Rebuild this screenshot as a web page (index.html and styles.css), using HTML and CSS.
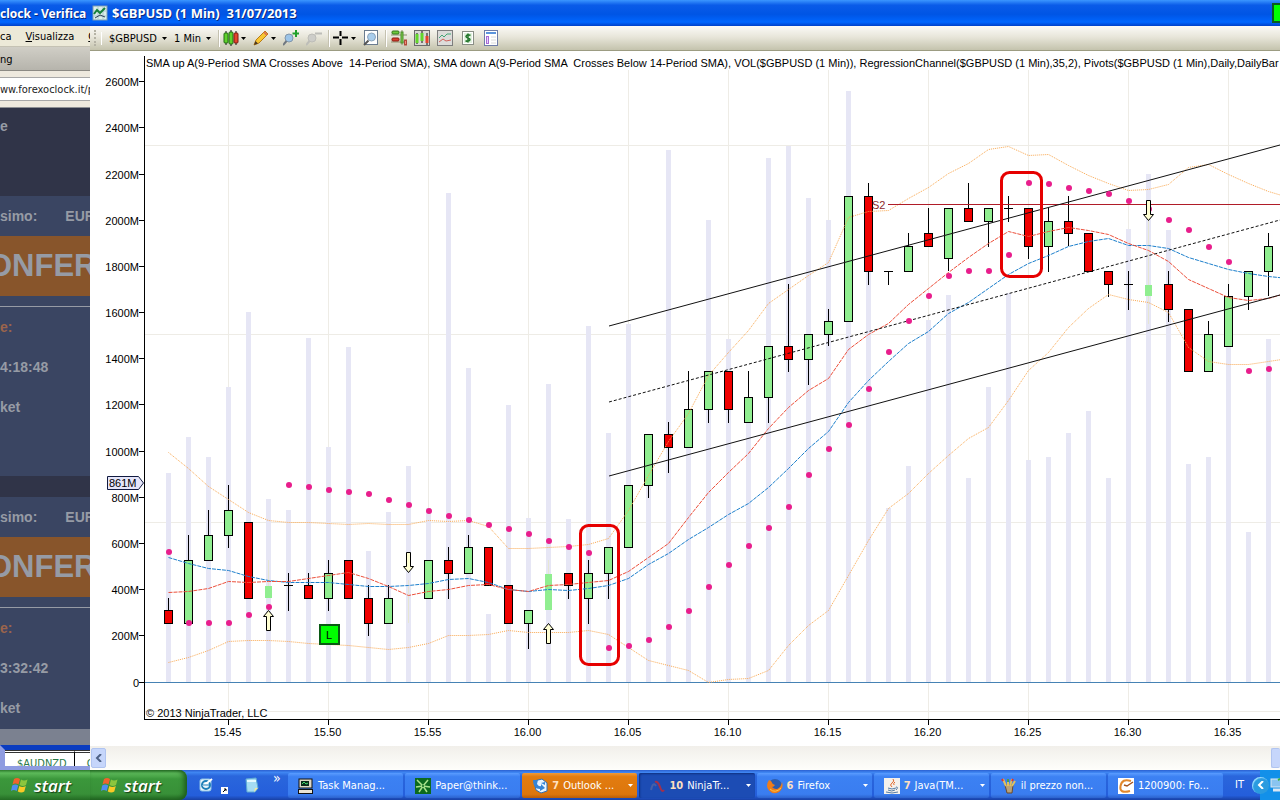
FILE: index.html
```html
<!DOCTYPE html>
<html lang="it">
<head>
    <meta charset="UTF-8">
    <meta name="viewport" content="width=device-width, initial-scale=1.0">
    <title>$GBPUSD (1 Min) 31/07/2013</title>
    <link rel="stylesheet" href="styles.css">
</head>
<body>
    <!-- Shared icons -->
    <svg class="defs" width="0" height="0">
        <symbol id="flag" viewBox="0 0 18 18">
            <path d="M3 3q3-2 6 0l-1.500 5.500q-3-2-6 0z" fill="#f0622c"/>
            <path d="M10 3.500q3 2 6.500 0L15 9q-3 2-6.500 0z" fill="#8cc63e"/>
            <path d="M1.200 9.500q3-2 6 0L5.700 15q-3-2-5.700 0z" fill="#4f8df0"/>
            <path d="M8.300 10q3 2 6.500 0l-1.500 5.500q-3 2-6.500 0z" fill="#fbc926"/>
        </symbol>
        <symbol id="caret" viewBox="0 0 5 3"><path d="M0 0h5L2.500 3z" fill="currentColor"/></symbol>
    </svg>

    <div class="desktop">
        <!-- Browser window behind -->
        <section class="browser">
            <div class="titlebar">clock - Verifica</div>
            <nav class="menubar">
                <a href="#">ca</a>
                <a href="#"><u>V</u>isualizza</a>
                <a href="#"><u>C</u></a>
            </nav>
            <div class="tabs">ng</div>
            <div class="address"><input type="text" aria-label="Indirizzo" value="ww.forexoclock.it/p"></div>
            <div class="page">
                <div class="page-head">e</div>
                <div class="pair"><span>simo:</span><span>EUR</span></div>
                <div class="banner">ONFER</div>
                <div class="info">
                    <p class="accent">e:</p>
                    <p>4:18:48</p>
                    <p>ket</p>
                </div>
                <div class="gap"></div>
                <div class="pair"><span>simo:</span><span>EUR</span></div>
                <div class="banner">ONFER</div>
                <div class="info last">
                    <p class="accent">e:</p>
                    <p>3:32:42</p>
                    <p>ket</p>
                </div>
            </div>
            <div class="page-foot"></div>
            <div class="grid-strip"><span>$AUDNZD</span><span>C</span></div>
        </section>

        <!-- Chart window -->
        <section class="chart-window">
            <header class="titlebar">
                <svg class="icon" viewBox="0 0 16 16"><rect x="1" y="1" width="14" height="14" fill="#dceee8" stroke="#7d9db5"/><path d="M1 6h14M1 11h14M6 1v14M11 1v14" stroke="#a9c6cf"/><path d="M2 9l3-4 3 3 5-5" stroke="#16803b" stroke-width="2" fill="none"/><path d="M3 13l5-3 5 2" stroke="#345" fill="none"/></svg>
                <h1>$GBPUSD (1 Min)&nbsp; 31/07/2013</h1>
                <span class="status-light"></span>
            </header>

            <div class="toolbar">
                <span class="grip"></span>
                <label class="picker wide"><select aria-label="Instrument"><option>$GBPUSD</option></select><svg><use href="#caret"/></svg></label>
                <label class="picker"><select aria-label="Period"><option>1 Min</option></select><svg><use href="#caret"/></svg></label>
                <span class="sep"></span>
                <button class="drop" aria-label="Chart style"><svg class="icon" viewBox="0 0 16 16"><path d="M3 1v14M8 0v16M13 1v14" stroke="#111"/><rect x="1" y="3" width="4" height="10" rx="1" fill="#5fd12c" stroke="#236b12"/><rect x="6" y="2" width="4" height="12" rx="1" fill="#5fd12c" stroke="#236b12"/><rect x="11" y="3" width="4" height="10" rx="1" fill="#e5442c" stroke="#7d1a10"/></svg><svg class="caret"><use href="#caret"/></svg></button>
                <button class="drop" aria-label="Drawing tools"><svg class="icon" viewBox="0 0 16 16"><path d="M1 15l2-5L12 1l3 3-9 9z" fill="#f8c632" stroke="#b77b17"/><path d="M1 15l1.500-4L5 13.500z" fill="#4a3a25"/><path d="M11 2l3 3" stroke="#e0744c" stroke-width="2"/></svg><svg class="caret"><use href="#caret"/></svg></button>
                <button aria-label="Zoom in"><svg class="icon" viewBox="0 0 16 16"><circle cx="6" cy="8" r="4" fill="#9cc4e8" stroke="#8296aa"/><path d="M3.500 11L0 15" stroke="#6f7780" stroke-width="2"/><path d="M13 0v7M9.500 3.500h7" stroke="#21a12c" stroke-width="2"/></svg></button>
                <button aria-label="Zoom out" disabled><svg class="icon" viewBox="0 0 16 16"><circle cx="6" cy="8" r="4" fill="#cdcdc9" stroke="#bdbdb8"/><path d="M3.500 11L0 15" stroke="#bdbdb8" stroke-width="2"/><path d="M9 3.500h7" stroke="#bdbdb8" stroke-width="2"/></svg></button>
                <span class="sep"></span>
                <button class="drop" aria-label="Cross hair"><svg class="icon" viewBox="0 0 16 16"><path d="M7.500 1v5M7.500 9v6M0 7.500h6M9 7.500h6" stroke="#000" stroke-width="2"/></svg><svg class="caret"><use href="#caret"/></svg></button>
                <button class="spaced" aria-label="Data box"><svg class="icon" viewBox="0 0 16 16"><rect x="1.500" y=".5" width="13" height="14" fill="#fff" stroke="#6b7c90"/><circle cx="8.500" cy="7" r="4" fill="#a9cdec" stroke="#8ba3ba"/><path d="M5.500 10.500L1 15" stroke="#555" stroke-width="2"/></svg></button>
                <span class="sep"></span>
                <button class="tool" aria-label="Chart trader"><svg class="icon" viewBox="0 0 16 16"><path d="M0 5h16M0 12h16M11 0v15" stroke="#8a8f6c"/><rect x="1" y="1" width="7" height="3" rx="1" fill="#6dc83b" stroke="#34741a"/><rect x="1" y="8" width="7" height="3" rx="1" fill="#dc3f2f" stroke="#8b1c12"/><rect x="10" y="2" width="2" height="11" fill="#7ed04b" stroke="#4a8c2a"/><rect x="13.500" y="10" width="2" height="5" fill="#f08a7c" stroke="#b04a3a"/></svg></button>
                <button class="tool" aria-label="Data series"><svg class="icon" viewBox="0 0 16 16"><rect x=".5" y=".5" width="15" height="15" fill="#d9d9d4" stroke="#6a6a6a"/><path d="M3 3v11M8 1v12M13 3v12" stroke="#111"/><rect x="1.500" y="4" width="3" height="9" fill="#63d62b"/><rect x="6.500" y="3" width="3" height="8" fill="#63d62b"/><rect x="11.500" y="6" width="3" height="7" fill="#e5442c"/></svg></button>
                <button class="tool" aria-label="Indicators"><svg class="icon" viewBox="0 0 16 16"><rect x=".5" y=".5" width="15" height="15" fill="#dcdcda" stroke="#7e7e7e"/><path d="M2 8l3-3 2 2 3-3h4" stroke="#43a777" fill="none"/><path d="M2 12l4-3 3 2 5-1" stroke="#d0605a" fill="none"/></svg></button>
                <button class="tool" aria-label="Strategies"><svg class="icon" viewBox="0 0 16 16"><rect x="2.500" y="1.500" width="11" height="13" fill="#fff" stroke="#8a8f86"/><rect x="4" y="3" width="8" height="10" fill="#e2f2df"/><path d="M10.500 5.500Q8 4 6.500 5.500T8 8t1.500 2.500-4 .3M8 3.500v9" stroke="#23762c" stroke-width="1.500" fill="none"/></svg></button>
                <button class="tool" aria-label="Properties"><svg class="icon" viewBox="0 0 16 16"><rect x="1.500" y=".5" width="13" height="15" fill="#fff" stroke="#6f7da8"/><rect x="3" y="2" width="10" height="2" fill="#5b94dc"/><rect x="3.500" y="6.500" width="2" height="7" fill="#ead5fa" stroke="#a56bd8"/><path d="M8 7h5M8 10h5M8 13h5" stroke="#dadada"/></svg></button>
            </div>

            <svg id="chart" class="chart" viewBox="90 51 1190 695" preserveAspectRatio="xMinYMin slice"></svg>

            <div class="scrollbar">
                <button aria-label="Scroll left"><svg viewBox="0 0 8 8"><path d="M6 0L2 4l4 4" fill="none" stroke="#4d6185" stroke-width="2"/></svg></button>
                <span class="thumb"></span>
            </div>
        </section>
    </div>

    <footer class="taskbar">
        <button class="start clipped"><svg><use href="#flag"/></svg>start</button>
        <button class="start"><svg><use href="#flag"/></svg>start</button>
        <div class="quick">
            <button aria-label="Browser"><svg class="icon" viewBox="0 0 16 16"><rect x="2" y="2" width="11" height="12" rx="2" fill="#e7f4fb" stroke="#8cc3e6"/><circle cx="8" cy="8" r="4" fill="none" stroke="#1d7fb8" stroke-width="2"/><path d="M5 9l9-7" stroke="#fff" stroke-width="2"/><path d="M5 8h6" stroke="#1d7fb8"/></svg></button>
            <svg class="shortcut" viewBox="0 0 7 7"><rect width="7" height="7" fill="#fff"/><path d="M2 5l3-3M3 2h2v2" stroke="#000" fill="none"/></svg>
            <button aria-label="Documents"><svg class="icon" viewBox="0 0 16 16"><path d="M2 2l10-1 2 10-3 4H3z" fill="#a5dcf3" stroke="#5eaad4"/><path d="M3 4h9" stroke="#e6faff" stroke-width="2"/><path d="M10 15l4-4h-3z" fill="#f2e7a0"/></svg></button>
            <span class="more">»</span>
        </div>
        <div class="tasks">
            <button><svg class="icon" viewBox="0 0 16 16"><rect x="1" y="1" width="13" height="9" fill="#ddd8c8" stroke="#111"/><rect x="3" y="3" width="8" height="5" fill="#0b2a1a"/><path d="M4 6l2-2 2 2 2-1" stroke="#43df6c" fill="none"/><rect x="0.500" y="11.500" width="14" height="4" fill="#e9e4d4" stroke="#111"/></svg><span>Task Manag...</span></button>
            <button><svg class="icon" viewBox="0 0 16 16"><rect width="16" height="16" fill="#0c6a1e"/><path d="M8 8L2 2M8 8l5-6M8 8l7 1M8 8l4 6M8 8l-4 6M8 8L1 9" stroke="#a8e28c" stroke-width="1.500"/><circle cx="8" cy="8" r="1" fill="#0c6a1e"/></svg><span>Paper@think...</span></button>
            <button class="alert"><svg class="icon" viewBox="0 0 16 16"><path d="M2 3l8-2 5 4v8l-6 2-5-3z" fill="#e8f4ff" stroke="#2f6fb4"/><path d="M1 2l5 0-1 4q2 3 4 2v-2l4 4-5 3v-2Q1 11 1 2z" fill="#3684d4"/><path d="M9 5l4-1v3z" fill="#3684d4"/></svg><b>7</b><span>Outlook ...</span><svg class="caret"><use href="#caret"/></svg></button>
            <button class="active"><svg class="icon" viewBox="0 0 16 16"><path d="M2 12Q4 3 7 8" stroke="#4560a8" stroke-width="2" fill="none"/><path d="M6 4q3-1 5 5t4 3" stroke="#a4304a" stroke-width="2" fill="none"/></svg><b>10</b><span>NinjaTr...</span><svg class="caret"><use href="#caret"/></svg></button>
            <button><svg class="icon" viewBox="0 0 16 16"><circle cx="8" cy="8" r="7" fill="#2c5cae"/><path d="M2 2Q-2 8 2 12.500t10 1.500q5-4 3-10-1 5-4 6.500T5 9q2 0 3-2-3-1-4-4z" fill="#ee7d1b"/><path d="M3 11q5 5 11-1" stroke="#fbc443" fill="none"/></svg><b>6</b><span>Firefox</span><svg class="caret"><use href="#caret"/></svg></button>
            <button><svg class="icon" viewBox="0 0 16 16"><rect width="16" height="16" fill="#f4f1ec"/><path d="M9 1q2 2-1 4t0 4M11 4q-2 1-1 3" stroke="#e2682a" fill="none"/><path d="M4 10q4 2 8 0M4 12q4 2 7 0M2 14q6 2 12 0M12 9q3 0 0 3" stroke="#567ca4" fill="none"/></svg><b>7</b><span>Java(TM...</span><svg class="caret"><use href="#caret"/></svg></button>
            <button><svg class="icon" viewBox="0 0 16 16"><path d="M4 7h8l-1 8H6z" fill="#b8a27a" stroke="#6a4a2c"/><path d="M5 8L2 1M7 8V2M9 8l2-7M11 8l3-5" stroke="#e0c060" stroke-width="2"/><path d="M2 3L1 1M11 3l1-2" stroke="#d33" stroke-width="2"/><path d="M7 4V1" stroke="#48a04c" stroke-width="2"/></svg><span>il prezzo non...</span></button>
            <button><svg class="icon" viewBox="0 0 16 16"><rect width="16" height="16" fill="#fff"/><path d="M13 3Q4 0 2.500 8T12 13" stroke="#e2882c" stroke-width="2" fill="none"/><path d="M6 7l3 1 6-4" stroke="#a5521c" stroke-width="1.500" fill="none"/></svg><span>1200900: Fo...</span></button>
        </div>
        <div class="lang">IT</div>
        <div class="tray">
            <button aria-label="Show hidden icons"><svg viewBox="0 0 8 8"><path d="M6 0L2 4l4 4" fill="none" stroke="#fff" stroke-width="2"/></svg></button>
            <svg class="icon" viewBox="0 0 16 16"><rect x="2" y="2" width="11" height="8" fill="#8ac4f0" stroke="#dbe7f2"/><path d="M4 13h9" stroke="#dbe7f2" stroke-width="3"/><path d="M9 3l4-2" stroke="#3ab83a" stroke-width="2"/></svg>
        </div>
    </footer>

    <script src="chart.js"></script>
</body>
</html>
```
FILE: styles.css
```css
/* Global Styles */
* {
    box-sizing: border-box;
}
body {
    margin: 0;
    height: 100vh;
    display: flex;
    flex-direction: column;
    overflow: hidden;
    font-family: "DejaVu Sans Condensed", "DejaVu Sans", sans-serif;
    font-size: 11px;
    color: #000;
}
button, select, input {
    font: inherit;
    color: inherit;
    border: none;
    background: none;
    padding: 0;
    margin: 0;
}
.defs {
    position: absolute;
}
.icon {
    width: 16px;
    height: 16px;
    flex: none;
    display: block;
}
.desktop {
    flex: 1;
    min-height: 0;
    display: flex;
}
.titlebar {
    height: 26px;
    flex: none;
    display: flex;
    align-items: center;
    background: linear-gradient(#3b96ff, #0a5be8 20%, #0055e5 55%, #0066ff 85%, #0040c8);
    color: #fff;
    font-family: "Noto Sans", sans-serif;
    font-size: 13px;
    font-weight: bold;
    text-shadow: 1px 1px 0 #0a2a80;
    white-space: nowrap;
}

/* Browser Window */
.browser {
    width: 90px;
    flex: none;
    display: flex;
    flex-direction: column;
    overflow: hidden;
    white-space: nowrap;
}
.browser .titlebar {
    font-size: 12px;
}
.menubar {
    height: 21px;
    flex: none;
    display: flex;
    gap: 14px;
    align-items: center;
    background: #ece9d8;
    border-bottom: 1px solid #c5c2b4;
}
.menubar a {
    color: #000;
    text-decoration: none;
}
.tabs {
    height: 24px;
    flex: none;
    line-height: 26px;
    background: linear-gradient(#d0cec6, #b6b4ac);
    border-bottom: 1px solid #8c8a84;
}
.address {
    height: 37px;
    flex: none;
    padding: 6px 0;
    background: #eee9de;
    border-bottom: 1px solid #8d8f93;
}
.address input {
    width: 100%;
    height: 24px;
    background: #fff;
    border: 1px solid #a8a8a8;
    border-width: 1px 0;
    color: #222;
}
.page {
    flex: 1;
    background: #3a4562;
    color: #969ba5;
    font-family: "Liberation Sans", Arial, sans-serif;
    font-size: 14px;
    font-weight: bold;
}
.page-head {
    height: 88px;
    padding-top: 10px;
    background: #303448;
}
.pair {
    height: 40px;
    display: flex;
    gap: 28px;
    align-items: center;
}
.banner {
    height: 60px;
    margin-bottom: 10px;
    line-height: 60px;
    text-indent: -12px;
    background: #88552b;
    font-size: 31px;
    overflow: hidden;
}
.info {
    height: 170px;
    border-top: 1px solid #969ba5;
}
.info.last {
    height: 122px;
}
.info p {
    margin: 0;
    line-height: 40px;
}
.info .accent {
    color: #9a644c;
}
.gap {
    height: 21px;
    background: #303448;
}
.page-foot {
    height: 16px;
    flex: none;
    background: #7b8190;
}
.grid-strip {
    height: 25px;
    flex: none;
    display: flex;
    border: solid #8f9ce0;
    border-top-color: #0a3cc0;
    border-width: 5px 0 4px 5px;
    background: #fff;
    color: #2a7a48;
    overflow: hidden;
}
.grid-strip span {
    padding: 4px 7px 0 12px;
    border-top: 3px double #333;
    border-right: 1px solid #000;
    line-height: 14px;
}

/* Chart Window */
.chart-window {
    flex: 1;
    min-width: 0;
    display: flex;
    flex-direction: column;
    background: #fff;
}
.chart-window .titlebar {
    padding-left: 2px;
    gap: 4px;
}
h1 {
    margin: 0;
    flex: 1;
    font-size: 13px;
}
.status-light {
    width: 8px;
    height: 20px;
    background: #0f0;
    border: 2px solid #0a5a20;
    border-right: none;
}
.toolbar {
    height: 25px;
    flex: none;
    display: flex;
    align-items: center;
    padding-left: 4px;
    background: linear-gradient(#fbfaf7, #e8e6da 45%, #c4c3ad);
    border-bottom: 1px solid #9c9c82;
}
.grip {
    width: 3px;
    height: 16px;
    margin-right: 4px;
    border-left: 2px dotted #b5b3a5;
}
.picker {
    display: flex;
    align-items: center;
    padding: 0 4px 0 3px;
    gap: 3px;
}
.picker select {
    appearance: none;
    width: 29px;
}
.picker.wide {
    padding-left: 7px;
    border-left: 1px solid #fff;
}
.picker.wide select {
    width: 50px;
}
.picker svg, .caret {
    width: 5px;
    height: 3px;
    flex: none;
}
.sep {
    width: 2px;
    height: 17px;
    margin: 0 3px;
    border-left: 1px solid #c5c2b0;
    border-right: 1px solid #fff;
}
.toolbar button {
    display: flex;
    align-items: center;
    gap: 2px;
    margin-right: 7px;
}
.toolbar button:disabled {
    margin-right: 3px;
}
.toolbar .spaced {
    margin-right: 3px;
}
.toolbar .tool {
    margin-left: 1px;
    margin-right: 6px;
}
.chart {
    flex: 1;
    width: 100%;
    min-height: 0;
    display: block;
    font-family: "Liberation Sans", Arial, sans-serif;
    font-size: 11px;
}
.chart text {
    white-space: pre;
}
.chart .grid {
    stroke: #eeece6;
}
.chart .axis {
    stroke: #000;
    fill: none;
}
.chart .volume {
    fill: #e6e6f5;
}
.chart .wick {
    stroke: #000;
}
.chart .wick.pale {
    stroke: #e6e6d2;
}
.chart .up {
    fill: #90ee90;
    stroke: #000;
}
.chart .down {
    fill: #f00000;
    stroke: #000;
}
.chart .signal {
    fill: #90ee90;
}
.chart .dot {
    fill: #e81e8c;
}
.chart .band, .chart .fast, .chart .slow {
    fill: none;
}
.chart .band {
    stroke: #faa850;
    stroke-dasharray: 1 1;
}
.chart .fast {
    stroke: #ec503c;
    stroke-dasharray: 4 1;
}
.chart .slow {
    stroke: #1e80cc;
    stroke-dasharray: 4 1;
}
.chart .channel {
    stroke: #111;
}
.chart .middle {
    stroke-dasharray: 3 2;
}
.chart .pivot {
    stroke: #b01c28;
}
.chart .pivot-label {
    fill: #8b2a30;
}
.chart .zero {
    stroke: #4682b4;
}
.chart .mark {
    fill: none;
    stroke: #e60000;
    stroke-width: 3;
}
.chart .arrow {
    fill: #ffffd2;
    stroke: #000;
}
.chart .tag {
    fill: #e6e6fa;
    stroke: #111a40;
}
.chart .entry {
    fill: #0f0;
    stroke: #0a5a14;
    stroke-width: 2;
}
.scrollbar {
    height: 24px;
    flex: none;
    display: flex;
    justify-content: space-between;
    align-items: center;
    padding-left: 1px;
    background: linear-gradient(#f1efea, #fefefb);
}
.scrollbar button, .thumb {
    width: 15px;
    height: 20px;
    border: 1px solid #b0c4f0;
    border-radius: 2px;
    background: #c6d6fb;
}
.scrollbar svg {
    width: 8px;
    height: 8px;
}
.thumb {
    width: 9px;
    border-right: none;
}

/* Taskbar */
.taskbar {
    height: 30px;
    flex: none;
    display: flex;
    background: linear-gradient(#2b5fd0, #3f86f2 8%, #2a66dc 20%, #245edb 85%, #1941a5);
    color: #fff;
}
.start {
    width: 97px;
    flex: none;
    display: flex;
    align-items: center;
    gap: 5px;
    padding-left: 11px;
    border-radius: 0 8px 8px 0;
    background: linear-gradient(#2c7a2c, #5dba5a 10%, #3b973b 30%, #389038 80%, #236b23);
    box-shadow: inset -3px 0 5px #1d5c1d;
    font-family: "Open Sans", sans-serif;
    font-size: 17px;
    font-weight: 600;
    font-style: italic;
    text-shadow: 1px 1px 1px #153f15;
}
.start.clipped {
    width: 90px;
    border-radius: 0;
    box-shadow: none;
}
.start svg {
    width: 18px;
    height: 18px;
    flex: none;
}
.quick {
    width: 101px;
    flex: none;
    display: flex;
    align-items: center;
    padding-left: 11px;
}
.shortcut {
    width: 7px;
    height: 7px;
    margin: 10px 16px 0 7px;
}
.more {
    margin: -14px 0 0 13px;
    font-size: 14px;
}
.tasks {
    flex: 1;
    min-width: 0;
    display: flex;
    gap: 2px;
    padding: 3px 0 2px;
}
.tasks button {
    flex: 1;
    min-width: 0;
    display: flex;
    align-items: center;
    gap: 4px;
    padding: 0 4px 0 10px;
    border-radius: 2px;
    background: linear-gradient(#5a9cff, #3c81f3 15%, #3a7df0 85%, #2c62cc);
    white-space: nowrap;
}
.tasks .alert {
    background: linear-gradient(#f09a38, #e27c10 15%, #dd760c 85%, #b85c08);
}
.tasks .active {
    background: #1c4cb4;
    box-shadow: inset 1px 1px 2px #0f3080;
}
.tasks b {
    color: #ffe0c0;
}
.tasks .caret {
    margin-left: auto;
}
.lang {
    width: 29px;
    padding-left: 12px;
    line-height: 30px;
}
.tray {
    width: 28px;
    flex: none;
    display: flex;
    align-items: center;
    background: linear-gradient(90deg, transparent 8px, #1290e9 8px);
}
.tray button {
    width: 17px;
    height: 17px;
    flex: none;
    border-radius: 50%;
    background: #2a9be0;
    box-shadow: inset 1px 1px 1px #9bdcff;
}
.tray button svg {
    width: 8px;
    height: 8px;
}
```
FILE: chart.js
```js
const svg = document.getElementById('chart');
const FIRST_X = 168; // first bar
const STEP = 20;     // distance between bars
const ZERO_Y = 682;
const RIGHT = 1280;

// [type, body top, body bottom, high, low]
const candles = [
    ['down', 610, 623, 598], ['up', 560, 623, 535], ['up', 535, 560, 510], ['up', 510, 535, 485, 548],
    ['down', 522, 598], ['signal', 586, 598, 560, 598], ['doji', 585, 585, 573, 611], ['down', 585, 598, 573],
    ['up', 573, 598, 560, 611], ['down', 560, 598], ['down', 598, 623, 585, 636], ['up', 598, 623, 585],
    ['pale', 0, 0, 580, 623], ['up', 560, 598], ['down', 560, 573, 547, 599], ['up', 547, 573, 535],
    ['down', 547, 585], ['down', 585, 623], ['up', 610, 623, 610, 649], ['signal', 574, 610, 560, 610],
    ['down', 573, 585, 573, 599], ['up', 573, 598, 560, 624], ['up', 547, 573, 547, 599], ['up', 485, 547],
    ['up', 434, 485, 434, 498], ['down', 434, 447, 422, 473], ['up', 409, 447, 371], ['up', 371, 409, 371, 423],
    ['down', 371, 409, 371, 423], ['up', 397, 422, 371], ['up', 346, 397, 346, 423], ['down', 346, 359, 284, 372],
    ['up', 334, 359, 334, 385], ['up', 321, 334, 309, 346], ['up', 196, 321], ['down', 196, 271, 183, 285],
    ['doji', 271, 271, 271, 285], ['up', 246, 271, 233], ['down', 233, 246, 208], ['up', 208, 258, 208, 271],
    ['down', 208, 221, 183], ['up', 208, 221, 208, 247], ['doji', 208, 208, 196, 222], ['down', 208, 246, 208, 259],
    ['up', 221, 246, 208, 272], ['down', 221, 233, 196, 246], ['down', 233, 271], ['down', 271, 284, 271, 297],
    ['doji', 284, 284, 271, 310], ['signal', 285, 296, 200, 324], ['down', 284, 309, 271, 322], ['down', 309, 371],
    ['up', 334, 371, 321], ['up', 296, 346, 284], ['up', 271, 296, 271, 310], ['up', 246, 271, 233, 296]
];

const volume = [
    473, 437, 457, 387, 312, 499, 510, 338, 447, 347, 551, 512, 466, 508, 193, 368, 614, 405, 518, 384,
    519, 326, 433, 324, 444, 150, 413, 220, 339, 400, 158, 146, 198, 220, 91, 200, 508, 466, 320, 295,
    478, 387, 293, 460, 457, 433, 411, 478, 229, 174, 230, 464, 457, 346, 532, 339
];

const sar = [
    552, 623, 623, 623, 615, 607, 485, 487, 490, 492, 494, 500, 505, 511, 516, 520, 525, 529, 534, 541,
    547, 553, 648, 646, 640, 627, 611, 587, 565, 546, 528, 507, 475, 449, 425, 389, 352, 321, 296, 276,
    271, 271, 255, 183, 184, 188, 191, 194, 201, 209, 220, 230, 247, 262, 371, 369
];

const upperBand = [
    452, 468, 486, 499, 512, 520, 522, 522, 523, 524, 523, 524, 524, 520, 521, 520, 526, 548, 548, 547,
    546, 544, 538, 510, 475, 441, 413, 375, 352, 330, 303, 289, 275, 262, 217, 211, 210, 198, 187, 173,
    163, 149, 146, 155, 154, 165, 175, 183, 190, 189, 184, 167, 164, 174, 183, 191, 197
];
const lowerBand = [
    662, 657, 650, 641, 640, 640, 641, 643, 644, 645, 647, 649, 647, 643, 635, 635, 634, 630, 632, 632,
    632, 630, 634, 647, 660, 665, 670, 682, 679, 678, 670, 645, 625, 610, 575, 540, 508, 493, 473, 455,
    438, 427, 400, 370, 352, 327, 308, 294, 299, 302, 312, 347, 361, 364, 364, 361, 358
];
const fastSma = [
    592, 591, 588, 581, 582, 581, 581, 578, 575, 572, 578, 586, 595, 591, 589, 585, 584, 589, 591, 585,
    584, 582, 580, 571, 557, 543, 517, 492, 472, 453, 428, 407, 390, 378, 349, 334, 323, 304, 288, 272,
    257, 243, 231, 236, 231, 227, 230, 234, 243, 250, 261, 279, 288, 297, 300, 298, 292
];
const slowSma = [
    557, 563, 568, 570, 576, 580, 582, 582, 582, 584, 586, 586, 585, 583, 579, 578, 582, 589, 591, 589,
    590, 588, 585, 578, 564, 553, 539, 527, 514, 503, 487, 468, 448, 431, 402, 380, 361, 343, 331, 313,
    302, 288, 274, 263, 255, 246, 241, 238, 245, 245, 248, 257, 263, 269, 273, 276, 278
];

function add(tag, className, attrs, text) {
    const el = document.createElementNS('http://www.w3.org/2000/svg', tag);
    el.setAttribute('class', className);
    for (const key in attrs) {
        el.setAttribute(key, attrs[key]);
    }
    if (text) {
        el.textContent = text;
    }
    svg.appendChild(el);
}

function line(className, x1, y1, x2, y2) {
    add('line', className, { x1, y1, x2, y2 });
}

function barX(i) {
    return FIRST_X + i * STEP + 0.5;
}

function series(className, values) {
    add('polyline', className, { points: values.map((y, i) => barX(i) + ',' + (y + 0.5)).join(' ') });
}

function arrow(x, y, dir) {
    const points = [[0, 0], [5, 6], [2, 6], [2, 20], [-2, 20], [-2, 6], [-5, 6]];
    add('polygon', 'arrow', { points: points.map(p => (x + p[0]) + ',' + (y + p[1] * dir)).join(' ') });
}

// Grid
for (let i = 3; i < 56; i += 5) {
    line('grid', barX(i), 70, barX(i), 719);
}
[145.5, 334.5, 522.5, 711.5].forEach(y => line('grid', 145, y, RIGHT, y));

volume.forEach((y, i) => add('rect', 'volume', { x: barX(i) - 2.5, y: y, width: 5, height: ZERO_Y - y }));
line('zero', 145, 682.5, RIGHT, 682.5);

// Candles
candles.forEach(([type, top, bottom, high, low], i) => {
    const x = barX(i);
    const pale = type === 'signal' || type === 'pale';
    if (high) {
        line(pale ? 'wick pale' : 'wick', x, high, x, low || bottom);
    }
    if (type === 'doji') {
        line('wick', x - 4.5, top + 0.5, x + 4.5, top + 0.5);
    } else if (type === 'signal') {
        add('rect', 'signal', { x: x - 3.5, y: top, width: 7, height: bottom - top });
    } else if (type !== 'pale') {
        add('rect', type, { x: x - 4, y: top + 0.5, width: 8, height: bottom - top });
    }
});

// Indicators
series('band', upperBand);
series('band', lowerBand);
series('slow', slowSma);
series('fast', fastSma);
line('pivot', 888, 204.5, RIGHT, 204.5);
add('text', 'pivot-label', { x: 872, y: 209 }, 'S2');
line('channel', 609, 326, RIGHT, 145);
line('channel middle', 609, 402, RIGHT, 220);
line('channel', 609, 476, RIGHT, 295);
sar.forEach((y, i) => add('circle', 'dot', { cx: barX(i) + 0.5, cy: y, r: 3 }));

// Marks
arrow(268.5, 610.5, 1);
arrow(408.5, 572.5, -1);
arrow(548.5, 623.5, 1);
arrow(1148.5, 220.5, -1);
add('rect', 'entry', { x: 320, y: 625, width: 19, height: 19 });
add('text', '', { x: 326, y: 639 }, 'L');
add('rect', 'mark', { x: 580.5, y: 525.5, width: 38, height: 139, rx: 8 });
add('rect', 'mark', { x: 1001.5, y: 172.5, width: 40, height: 104, rx: 8 });

// Axes
line('axis', 144.5, 56, 144.5, 720);
line('axis', 144, 719.5, RIGHT, 719.5);
[682, 635, 589, 543, 497, 451, 404, 358, 312, 266, 220, 174, 127, 81].forEach((y, i) => {
    line('axis', 139, y + 0.5, 144, y + 0.5);
    add('text', '', { x: 139, y: y + 5, 'text-anchor': 'end' }, i ? i * 200 + 'M' : '0');
});
['15.45', '15.50', '15.55', '16.00', '16.05', '16.10', '16.15', '16.20', '16.25', '16.30', '16.35'].forEach((label, i) => {
    const x = barX(3 + i * 5);
    line('axis', x, 720, x, 725);
    add('text', '', { x: x - 1, y: 736, 'text-anchor': 'middle' }, label);
});
add('polygon', 'tag', { points: '107.5,476.5 138.5,476.5 143.5,483 138.5,489.5 107.5,489.5' });
add('text', '', { x: 109, y: 487 }, '861M');

add('text', '', { x: 146, y: 67 }, 'SMA up A(9-Period SMA Crosses Above  14-Period SMA), SMA down A(9-Period SMA  Crosses Below 14-Period SMA), VOL($GBPUSD (1 Min)), RegressionChannel($GBPUSD (1 Min),35,2), Pivots($GBPUSD (1 Min),Daily,DailyBar');
add('text', '', { x: 146, y: 717 }, '© 2013 NinjaTrader, LLC');
```
